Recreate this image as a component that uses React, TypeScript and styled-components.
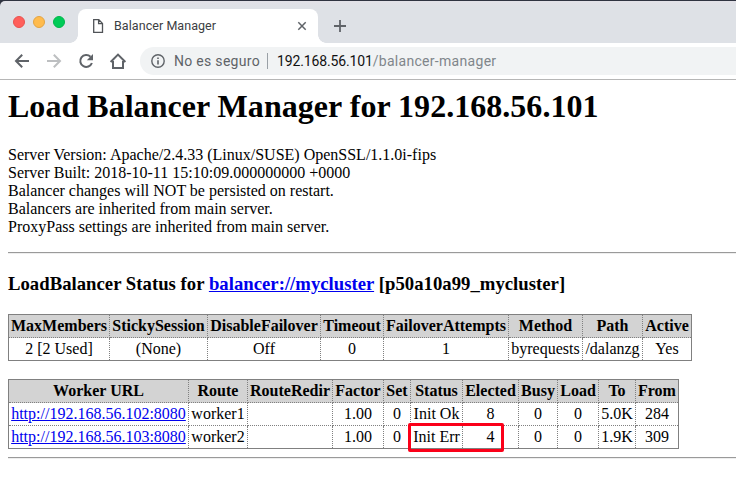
import React from 'react';
import styled, { createGlobalStyle } from 'styled-components';

const GlobalStyle = createGlobalStyle`
  * { box-sizing: border-box; }
  body { margin: 0; background: #fff; overflow: hidden; }
`;

const Browser = styled.div`
  width: 736px;
  height: 480px;
  overflow: hidden;
  background: #fff;
  color: #000;
  font: 16px/18px "Liberation Serif", "Times New Roman", serif;
`;

const Desktop = styled.div`
  height: 43px;
  padding-top: 1px;
  background: #2f3340;
`;

const TabStrip = styled.div`
  display: flex;
  height: 42px;
  border-top-left-radius: 5px;
  background: linear-gradient(#e2e1e7, #dee1e6 6px);
`;

const WindowButtons = styled.div`
  display: flex;
  gap: 8px;
  padding: 15px 0 0 13px;
  width: 78px;
`;

const WindowButton = styled.i<{ $fill: string; $edge: string }>`
  width: 12px;
  height: 12px;
  border-radius: 50%;
  border: 1px solid ${(p) => p.$edge};
  background: ${(p) => p.$fill};
`;

const Tab = styled.div`
  position: relative;
  display: flex;
  align-items: center;
  width: 240px;
  height: 34px;
  margin-top: 8px;
  padding: 0 11px 0 14px;
  border-radius: 8px 8px 0 0;
  background: #fff;
  color: #3c4043;
  font: 12.5px/16px Roboto, sans-serif;

  &::before,
  &::after {
    content: '';
    position: absolute;
    bottom: 0;
    width: 8px;
    height: 8px;
  }
  &::before {
    left: -8px;
    background: radial-gradient(circle at 0 0, transparent 7.5px, #fff 8px);
  }
  &::after {
    right: -8px;
    background: radial-gradient(circle at 100% 0, transparent 7.5px, #fff 8px);
  }
`;

const TabTitle = styled.span`
  flex: 1;
  margin-left: 10px;
  letter-spacing: 0.06px;
`;

const NewTab = styled.div`
  padding: 19px 0 0 16px;
  line-height: 0;
`;

const Toolbar = styled.div`
  display: flex;
  align-items: center;
  height: 37px;
  padding: 0 0 1px 12px;
  border-bottom: 1px solid #b6b6b6;
`;

const NavIcons = styled.div`
  display: flex;
  gap: 12px;
  width: 128px;
`;

const Omnibox = styled.div`
  display: flex;
  flex: 1;
  align-items: center;
  height: 28px;
  margin-top: 1px;
  padding-left: 11px;
  border-radius: 14px 0 0 14px;
  background: #f1f3f4;
  color: #5f6368;
  font: 14px/18px Roboto, sans-serif;
`;

const Security = styled.span`
  width: 85px;
  margin-left: 9px;
  letter-spacing: 0.3px;
  white-space: nowrap;
`;

const Divider = styled.i`
  width: 1px;
  height: 16px;
  margin: 0 9px 0 8px;
  background: #9aa0a6;
`;

const Url = styled.span`
  color: #80868b;
  letter-spacing: 0.3px;
  white-space: nowrap;
`;

const Host = styled.span`
  color: #111;
  letter-spacing: -0.14px;
`;

const Page = styled.main`
  padding: 8px 0 0 8px;
`;

const Title = styled.h1`
  margin: 0 0 21px;
  font-size: 32px;
  line-height: 37px;
  letter-spacing: 0.03px;
  white-space: nowrap;
`;

const Details = styled.div`
  margin: 0;
`;

const Detail = styled.div`
  white-space: nowrap;
`;

const Rule = styled.hr<{ $top: number }>`
  height: 2px;
  margin: ${(p) => p.$top}px 0 0;
  border: 0;
  border-top: 1px solid #9a9a9a;
  border-bottom: 1px solid #eee;
`;

const Heading = styled.h3`
  margin: 19px 0;
  font-size: 18.72px;
  line-height: 22px;
  letter-spacing: 0.02px;
  white-space: nowrap;
`;

const Link = styled.a`
  color: #0000ee;
  text-decoration: underline;
`;

const Table = styled.table<{ $width: number; $gap?: number }>`
  width: ${(p) => p.$width}px;
  margin-top: ${(p) => p.$gap ?? 0}px;
  table-layout: fixed;
  border: 1px solid gray;
  border-collapse: collapse;
  text-align: center;
  white-space: nowrap;
`;

const Col = styled.col<{ $width: number }>`
  width: ${(p) => p.$width}px;
`;

const Th = styled.th`
  height: 23px;
  padding: 2px 0;
  border: 1px dotted gray;
  background: lightgray;
`;

const Td = styled.td`
  height: 23px;
  padding: 2px 0;
  border: 1px dotted gray;
`;

const WorkerArea = styled.div`
  position: relative;
`;

const Highlight = styled.div`
  position: absolute;
  left: 400px;
  top: 44px;
  width: 96px;
  height: 29px;
  border: 3px solid #fb0019;
  border-radius: 2px;
`;

const svg = { fill: 'none', stroke: '#5f6368', strokeWidth: 2 };

const BackIcon = () => (
  <svg width="20" height="20" viewBox="0 0 20 20" {...svg}>
    <path d="M17 10H4.5M10.2 3.8 4 10l6.2 6.2" />
  </svg>
);
const ForwardIcon = () => (
  <svg width="20" height="20" viewBox="0 0 20 20" {...svg} stroke="#bdbfc1">
    <path d="M3 10h12.5M9.8 3.8 16 10l-6.2 6.2" />
  </svg>
);
const ReloadIcon = () => (
  <svg width="20" height="20" viewBox="0 0 20 20" {...svg}>
    <path d="M14.5 5.7A6 6 0 1 0 15.9 12" />
    <path d="M17 3v6.2h-6.2z" fill="#5f6368" stroke="none" />
  </svg>
);
const HomeIcon = () => (
  <svg width="20" height="20" viewBox="0 0 20 20" {...svg}>
    <path d="M2.6 11 10 3.6l7.4 7.4M5 10v7h10v-7" />
  </svg>
);
const InfoIcon = () => (
  <svg width="14" height="14" viewBox="0 0 14 14" {...svg} strokeWidth="1.4">
    <circle cx="7" cy="7" r="6.2" />
    <path d="M7 6.2v4.3M7 3.4v1.5" strokeWidth="1.6" />
  </svg>
);
const FileIcon = () => (
  <svg width="12" height="16" viewBox="0 0 12 16" {...svg} stroke="#505357" strokeWidth="1.3">
    <path d="M1.7 1.7h5.1l3.7 3.7v8.9H1.7zM6.6 1.7v3.9h3.9" />
  </svg>
);
const CloseIcon = () => (
  <svg width="10" height="10" viewBox="0 0 10 10" {...svg} strokeWidth="1.5">
    <path d="m1.3 1.3 7.4 7.4m0-7.4L1.3 8.7" />
  </svg>
);
const PlusIcon = () => (
  <svg width="12" height="12" viewBox="0 0 12 12" {...svg} strokeWidth="1.8">
    <path d="M6 0v12M0 6h12" />
  </svg>
);

type Cell = React.ReactNode;

function DataTable({ cols, head, rows, gap }: { cols: number[]; head: string[]; rows: Cell[][]; gap?: number }) {
  return (
    <Table $width={cols.reduce((a, b) => a + b, 1)} $gap={gap}>
      <colgroup>{cols.map((w, i) => <Col key={i} $width={w} />)}</colgroup>
      <thead><tr>{head.map((h) => <Th key={h}>{h}</Th>)}</tr></thead>
      <tbody>
        {rows.map((r, i) => <tr key={i}>{r.map((c, j) => <Td key={j}>{c}</Td>)}</tr>)}
      </tbody>
    </Table>
  );
}

const details = [
  'Server Version: Apache/2.4.33 (Linux/SUSE) OpenSSL/1.1.0i-fips',
  'Server Built: 2018-10-11 15:10:09.000000000 +0000',
  'Balancer changes will NOT be persisted on restart.',
  'Balancers are inherited from main server.',
  'ProxyPass settings are inherited from main server.',
];

export default function App() {
  return (
    <Browser>
      <GlobalStyle />
      <Desktop>
        <TabStrip>
          <WindowButtons>
            <WindowButton $fill="#ff5f5b" $edge="#e9524f" />
            <WindowButton $fill="#ffbb4d" $edge="#e3a443" />
            <WindowButton $fill="#00cb57" $edge="#00b64b" />
          </WindowButtons>
          <Tab>
            <FileIcon />
            <TabTitle>Balancer Manager</TabTitle>
            <CloseIcon />
          </Tab>
          <NewTab><PlusIcon /></NewTab>
        </TabStrip>
      </Desktop>
      <Toolbar>
        <NavIcons><BackIcon /><ForwardIcon /><ReloadIcon /><HomeIcon /></NavIcons>
        <Omnibox>
          <InfoIcon />
          <Security>No es seguro</Security>
          <Divider />
          <Url><Host>192.168.56.101</Host>/balancer-manager</Url>
        </Omnibox>
      </Toolbar>
      <Page>
        <Title>Load Balancer Manager for 192.168.56.101</Title>
        <Details>{details.map((d) => <Detail key={d}>{d}</Detail>)}</Details>
        <Rule $top={16} />
        <Heading>LoadBalancer Status for <Link>balancer://mycluster</Link> [p50a10a99_mycluster]</Heading>
        <DataTable
          cols={[101, 98, 113, 63, 125, 74, 60, 49]}
          head={['MaxMembers', 'StickySession', 'DisableFailover', 'Timeout', 'FailoverAttempts', 'Method', 'Path', 'Active']}
          rows={[['2 [2 Used]', '(None)', 'Off', '0', '1', 'byrequests', '/dalanzg', 'Yes']]}
        />
        <WorkerArea>
          <DataTable
            gap={18}
            cols={[180, 59, 85, 51, 27, 52, 56, 39, 41, 37, 43]}
            head={['Worker URL', 'Route', 'RouteRedir', 'Factor', 'Set', 'Status', 'Elected', 'Busy', 'Load', 'To', 'From']}
            rows={[
              [<Link>http://192.168.56.102:8080</Link>, 'worker1', '', '1.00', '0', 'Init Ok', '8', '0', '0', '5.0K', '284'],
              [<Link>http://192.168.56.103:8080</Link>, 'worker2', '', '1.00', '0', 'Init Err', '4', '0', '0', '1.9K', '309'],
            ]}
          />
          <Highlight />
        </WorkerArea>
        <Rule $top={8} />
      </Page>
    </Browser>
  );
}
